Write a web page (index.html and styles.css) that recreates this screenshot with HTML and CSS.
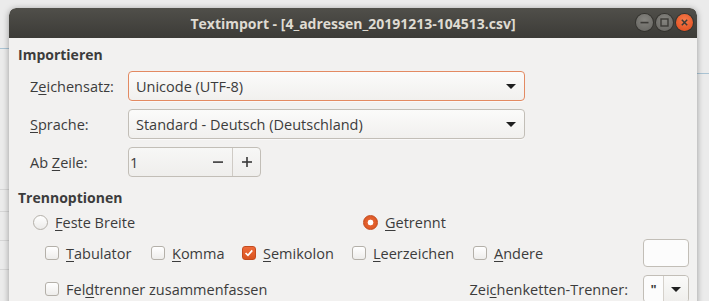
FILE: index.html
```html
<!DOCTYPE html>
<html lang="de">
<head>
<meta charset="utf-8">
<title>Textimport</title>
<link rel="stylesheet" href="styles.css">
</head>
<body>
<div class="desktop">
  <div class="bgwin">
    <div class="bg-line l1"></div>
    <div class="bg-line l2"></div>
    <div class="bg-line l3"></div>
    <div class="bg-line l4"></div>
    <div class="bg-line l5"></div>
    <div class="bg-line r1"></div>
  </div>
  <div class="window">
    <div class="titlebar">
      <span class="title">Textimport - [4_adressen_20191213-104513.csv]</span>
      <div class="wbtns">
        <span class="wbtn min"><svg width="17" height="17" viewBox="0 0 17 17"><rect x="4.5" y="7.8" width="8" height="1.6" fill="#3c3b37"/></svg></span>
        <span class="wbtn max"><svg width="17" height="17" viewBox="0 0 17 17"><rect x="5" y="5" width="7" height="7" fill="none" stroke="#3c3b37" stroke-width="1.4"/></svg></span>
        <span class="wbtn close"><svg width="17" height="17" viewBox="0 0 17 17"><path d="M5.8 5.8 L11.2 11.2 M11.2 5.8 L5.8 11.2" stroke="#3c3b37" stroke-width="1.5"/></svg></span>
      </div>
    </div>
    <div class="content">
      <div class="heading">Importieren</div>
      <div class="form">
        <label class="lbl">Z<u>e</u>ichensatz:</label>
        <div class="combo focus"><span>Unicode (UTF-8)</span><span class="arrow"></span></div>
        <label class="lbl"><u>S</u>prache:</label>
        <div class="combo"><span>Standard - Deutsch (Deutschland)</span><span class="arrow"></span></div>
        <label class="lbl">Ab <u>Z</u>eile:</label>
        <div class="spin"><span class="spin-val">1</span><span class="spin-btn minus"><svg width="12" height="12" viewBox="0 0 12 12"><rect x="1" y="5.3" width="10" height="1.6" fill="#3a3a3a"/></svg></span><span class="spin-btn plus"><svg width="12" height="12" viewBox="0 0 12 12"><rect x="1" y="5.2" width="10" height="1.6" fill="#3a3a3a"/><rect x="5.2" y="1" width="1.6" height="10" fill="#3a3a3a"/></svg></span></div>
      </div>
      <div class="heading h2">Trennoptionen</div>
      <div class="radios">
        <div class="opt r-fixed"><span class="radio"></span><span><u>F</u>este Breite</span></div>
        <div class="opt r-sep"><span class="radio on"></span><span><u>G</u>etrennt</span></div>
      </div>
      <div class="checks">
        <div class="opt c1"><span class="check"></span><span><u>T</u>abulator</span></div>
        <div class="opt c2"><span class="check"></span><span><u>K</u>omma</span></div>
        <div class="opt c3"><span class="check on"><svg width="14" height="14" viewBox="0 0 14 14"><path d="M3 7 L5.8 9.7 L10.8 4" fill="none" stroke="#fff" stroke-width="2"/></svg></span><span><u>S</u>emikolon</span></div>
        <div class="opt c4"><span class="check"></span><span><u>L</u>eerzeichen</span></div>
        <div class="opt c5"><span class="check"></span><span><u>A</u>ndere</span></div>
        <div class="entry"></div>
      </div>
      <div class="row3">
        <div class="opt"><span class="check"></span><span>Fel<u>d</u>trenner zusammenfassen</span></div>
        <div class="quote">
          <span class="qlbl">Zei<u>c</u>henketten-Trenner:</span>
          <div class="qcombo"><span class="qval">"</span><span class="qbtn"><span class="arrow"></span></span></div>
        </div>
      </div>
    </div>
  </div>
</div>
</body>
</html>
```
FILE: styles.css
```css
* { box-sizing: border-box; }
html, body { margin: 0; padding: 0; }
body {
  width: 709px;
  height: 301px;
  overflow: hidden;
  background: #ececec;
  font-family: "Open Sans", "Noto Sans", sans-serif;
  color: #3c3c3c;
}
u { text-decoration-thickness: 1px; text-underline-offset: 2px; }
.desktop { position: relative; width: 709px; height: 301px; overflow: hidden; }
.bgwin { position: absolute; inset: 0; background: #ebebeb; }
.bg-line { position: absolute; height: 1px; background: #d6d6d6; }
.l1 { left: 0; width: 12px; top: 48px; background: #a9c3d3; }
.l2 { left: 0; width: 12px; top: 189px; }
.l3 { left: 0; width: 12px; top: 211px; }
.l4 { left: 0; width: 12px; top: 240px; }
.l5 { left: 0; width: 12px; top: 269px; }
.r1 { left: 695px; width: 14px; top: 73px; background: #a9c3d3; }

.window {
  position: absolute;
  left: 9px;
  top: 8px;
  width: 688px;
  height: 300px;
  background: #f2f1f0;
  border-radius: 7px 7px 0 0;
  box-shadow: 0 1px 6px rgba(0,0,0,0.35);
  display: flex;
  flex-direction: column;
  overflow: hidden;
}
.titlebar {
  height: 30px;
  flex: none;
  border-radius: 7px 7px 0 0;
  background: linear-gradient(#504f4a, #3c3b37);
  display: flex;
  align-items: center;
  justify-content: center;
  position: relative;
}
.title {
  font-family: "Open Sans", sans-serif;
  font-weight: 700;
  font-size: 14px;
  letter-spacing: 0;
  color: #dfdbd2;
  padding-top: 1px;
}
.wbtns {
  position: absolute;
  right: 4px;
  top: 6px;
  display: flex;
  gap: 3px;
}
.wbtn {
  width: 17px;
  height: 17px;
  border-radius: 50%;
  display: flex;
  align-items: center;
  justify-content: center;
  background: radial-gradient(circle at 50% 35%, #85847f, #64635f);
  box-shadow: 0 0 0 1px #34332f;
}
.wbtn.close { background: radial-gradient(circle at 50% 35%, #f57a4a, #e0491a); }

.content {
  padding: 7px 0 0 9px;
  font-size: 14px;
}
.heading {
  font-weight: 700;
  height: 20px;
  line-height: 20px;
  font-size: 14px;
}
.form {
  margin-top: 6px;
  display: grid;
  grid-template-columns: 98px auto;
  row-gap: 8px;
  align-items: center;
  padding-left: 12px;
}
.lbl { font-size: 14.5px; }
.combo {
  width: 397px;
  height: 30px;
  border: 1px solid #c2beb7;
  border-radius: 4px;
  background: linear-gradient(#fbfbfa, #f1f0ee);
  display: flex;
  align-items: center;
  justify-content: space-between;
  padding: 0 8px 0 7px;
  font-size: 14.5px;
  box-shadow: 0 1px 0 rgba(255,255,255,0.6);
}
.combo.focus { border-color: #e38a62; }
.arrow {
  width: 0;
  height: 0;
  border-left: 5px solid transparent;
  border-right: 5px solid transparent;
  border-top: 5px solid #1f1f1f;
}
.spin {
  width: 133px;
  height: 30px;
  border: 1px solid #c2beb7;
  border-radius: 4px;
  background: linear-gradient(#f7f7f6, #efeeec);
  display: flex;
  align-items: center;
  font-size: 14.5px;
}
.spin-val { flex: 1; padding-left: 1px; }
.spin-btn {
  width: 28px;
  height: 100%;
  display: flex;
  align-items: center;
  justify-content: center;
}
.spin-btn.plus { border-left: 1px solid #cfcbc5; }
.h2 { margin-top: 11px; }
.radios {
  display: flex;
  height: 20px;
  align-items: center;
  margin-top: 4px;
  padding-left: 15px;
  font-size: 14.5px;
}
.opt { display: flex; align-items: center; gap: 7px; }
.r-fixed { width: 330px; }
.radio {
  width: 15px;
  height: 15px;
  border-radius: 50%;
  border: 1px solid #b4b0a9;
  background: linear-gradient(#ffffff, #ecebe9);
  display: inline-block;
}
.radio.on {
  border-color: #c24a1d;
  background: radial-gradient(circle, #ffffff 0 2.6px, #e46230 3.2px, #d9541f 100%);
}
.checks {
  display: flex;
  align-items: center;
  height: 28px;
  margin-top: 7px;
  padding-left: 27px;
  font-size: 14.5px;
}
.check {
  width: 14px;
  height: 14px;
  border-radius: 3px;
  border: 1px solid #b4b0a9;
  background: linear-gradient(#ffffff, #eeedeb);
  display: inline-flex;
  align-items: center;
  justify-content: center;
  flex: none;
}
.check.on { border-color: #c34b1e; background: linear-gradient(#ee6b3a, #d9531f); }
.c1 { width: 106px; }
.c2 { width: 91px; }
.c3 { width: 110px; }
.c4 { width: 121px; }
.c5 { width: 170px; }
.entry {
  width: 46px;
  height: 28px;
  border: 1px solid #c2beb7;
  border-radius: 4px;
  background: #fcfcfc;
}
.row3 {
  display: flex;
  align-items: center;
  justify-content: space-between;
  height: 28px;
  margin-top: 8px;
  padding-left: 27px;
  padding-right: 8px;
  font-size: 14.5px;
}
.quote { display: flex; align-items: center; gap: 15px; }
.qcombo {
  width: 46px;
  height: 28px;
  border: 1px solid #c2beb7;
  border-radius: 4px;
  background: #fcfcfc;
  display: flex;
}
.qval { width: 20px; text-align: center; font-size: 13px; font-weight: 700; padding-top: 4px; border-right: 1px solid #d5d1cb; }
.qbtn { flex: 1; display: flex; align-items: center; justify-content: center; background: linear-gradient(#fafaf9, #efeeec); border-radius: 0 4px 4px 0; }
```
